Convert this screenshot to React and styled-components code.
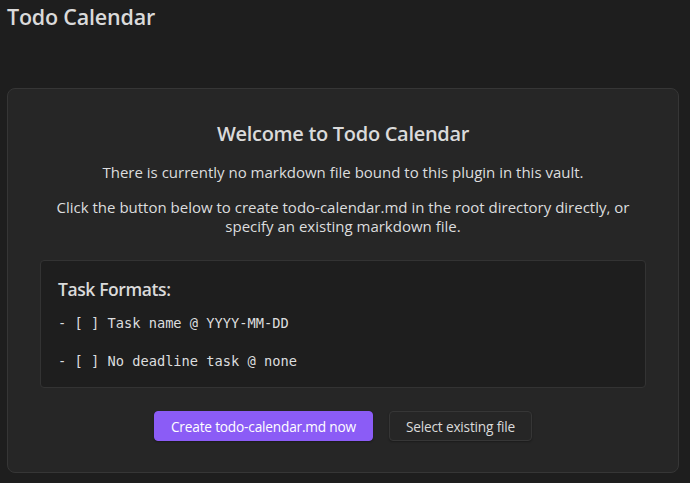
import React from "react";
import styled, { createGlobalStyle } from "styled-components";

const GlobalStyle = createGlobalStyle`
  html, body {
    margin: 0;
    background: #1e1e1e;
    font-family: "Open Sans", "Noto Sans", sans-serif;
    color: #dcddde;
  }
`;

const Page = styled.div`
  padding: 0 11px 0 7px;
`;

const Title = styled.h1`
  margin: 0;
  padding-top: 2px;
  height: 86px;
  font-size: 21.5px;
  line-height: 30px;
  font-weight: 600;
  letter-spacing: -0.2px;
  color: #dadada;
`;

const Card = styled.div`
  background: #262626;
  border: 1px solid #363636;
  border-radius: 8px;
  padding: 32px 32px 31px;
  text-align: center;
`;

const Heading = styled.h2`
  margin: 0 0 16px;
  font-size: 20px;
  line-height: 26px;
  font-weight: 600;
  letter-spacing: -0.3px;
  color: #dadada;
`;

const Text = styled.p`
  margin: 0 0 16px;
  padding: 0 12px;
  font-size: 15px;
  line-height: 19px;
`;

const Formats = styled.div`
  margin-top: 24px;
  background: #1e1e1e;
  border: 1px solid #333;
  border-radius: 4px;
  padding: 16px 17px 16px;
  text-align: left;
`;

const FormatsTitle = styled.h3`
  margin: 0 0 12px;
  font-size: 17.5px;
  line-height: 24px;
  font-weight: 600;
  letter-spacing: -0.4px;
  color: #dadada;
`;

const Code = styled.div`
  font-family: "DejaVu Sans Mono", "Liberation Mono", monospace;
  font-size: 13.7px;
  line-height: 20px;
  white-space: pre;
  color: #dcddde;
  & + & {
    margin-top: 18px;
  }
`;

const Actions = styled.div`
  display: flex;
  justify-content: center;
  gap: 16px;
  margin-top: 23px;
`;

const Button = styled.button`
  height: 30px;
  padding: 0 16px;
  border-radius: 4px;
  font-family: inherit;
  font-size: 13.7px;
  font-weight: 500;
  letter-spacing: -0.2px;
  cursor: pointer;
  border: 1px solid ${(p) => (p.$primary ? "#8b5cf6" : "#363636")};
  background: ${(p) => (p.$primary ? "#8b5cf6" : "#262626")};
  color: ${(p) => (p.$primary ? "#ffffff" : "#dadada")};
  box-shadow: 0 1px 2px rgba(0, 0, 0, 0.3);
`;

export default function App() {
  return (
    <Page>
      <GlobalStyle />
      <Title>Todo Calendar</Title>
      <Card>
        <Heading>Welcome to Todo Calendar</Heading>
        <Text>There is currently no markdown file bound to this plugin in this vault.</Text>
        <Text>
          Click the button below to create todo-calendar.md in the root directory directly, or
          specify an existing markdown file.
        </Text>
        <Formats>
          <FormatsTitle>Task Formats:</FormatsTitle>
          <Code>- [ ] Task name @ YYYY-MM-DD</Code>
          <Code>- [ ] No deadline task @ none</Code>
        </Formats>
        <Actions>
          <Button $primary>Create todo-calendar.md now</Button>
          <Button>Select existing file</Button>
        </Actions>
      </Card>
    </Page>
  );
}
